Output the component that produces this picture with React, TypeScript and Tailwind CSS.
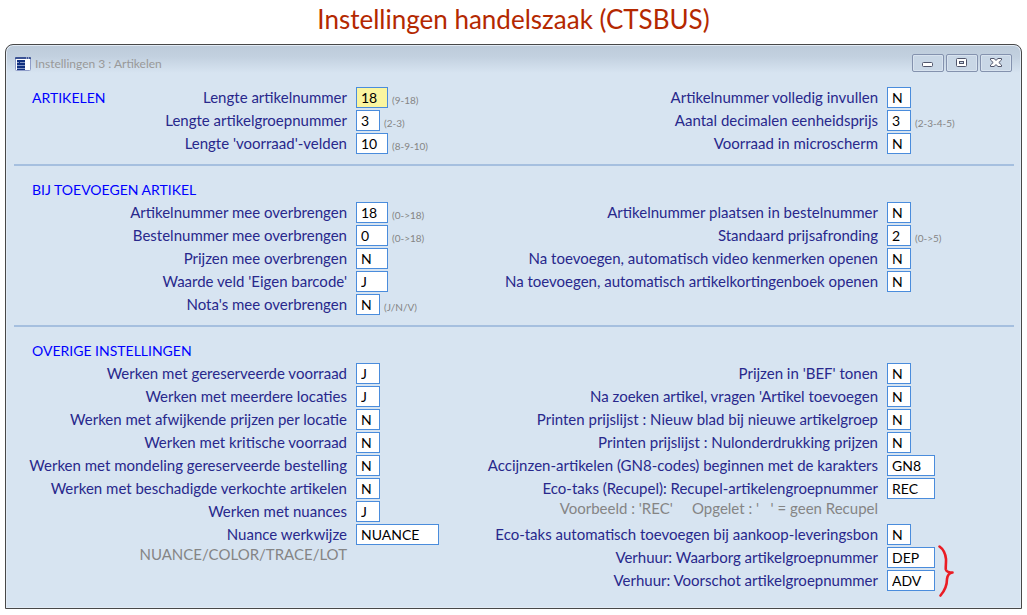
import { useId } from "react";

type FieldSize = "one" | "two" | "three" | "text";

const fieldWidths: Record<FieldSize, string> = {
  one: "w-6",
  two: "w-8",
  three: "w-12",
  text: "w-[83px]",
};

interface FieldProps {
  label: string;
  value: string;
  size?: FieldSize;
  hint?: string;
  active?: boolean;
}

function Field({ label, value, size = "one", hint, active = false }: FieldProps) {
  const id = useId();
  return (
    <div className="grid h-[23px] grid-cols-[minmax(0,1fr)_128px] items-start gap-[9px]">
      <label htmlFor={id} className="text-right leading-[21px] whitespace-nowrap text-[#28288c]">
        {label}
      </label>
      <div className="flex items-start gap-1">
        <input
          id={id}
          type="text"
          defaultValue={value}
          className={`h-[21px] border border-[#4a8cdc] px-1 text-[14px] leading-[19px] text-black outline-none ${
            fieldWidths[size]
          } ${active ? "bg-[#faf5a0]" : "bg-white"}`}
        />
        {hint && (
          <span className="pt-1 text-[10px] leading-[18px] whitespace-nowrap text-[#858585]">{hint}</span>
        )}
      </div>
    </div>
  );
}

function Note({ children }: { children: string }) {
  return (
    <p className="h-[23px] pr-[137px] text-right leading-[15px] whitespace-pre text-[#858585]">{children}</p>
  );
}

function Heading({ children }: { children: string }) {
  return <h2 className="h-[23px] pl-1 text-[14px] leading-[22px] text-[#0000ff]">{children}</h2>;
}

function Rule() {
  return <hr className="mr-[7px] ml-2 h-0.5 border-0 bg-[#a5bfdf]" />;
}

const columns = "grid grid-cols-[456fr_531fr] pl-[22px] pr-1.5";

function WindowButton({ label, children }: { label: string; children: React.ReactNode }) {
  return (
    <button
      type="button"
      aria-label={label}
      className="flex h-[18px] w-8 items-center justify-center rounded-xs border border-[#8492ae] bg-[#c9d7e6] inset-ring inset-ring-[#d8e3ef]"
    >
      {children}
    </button>
  );
}

export default function App() {
  return (
    <main className="bg-white px-[5px] pb-[6px] font-['Lato','Noto_Sans',sans-serif] text-[15px] text-black">
      <h1 className="h-11 text-center text-[26px] leading-[38px] text-[#b42800]">
        Instellingen handelszaak (CTSBUS)
      </h1>

      <div className="rounded-t-lg border border-[#484848] bg-[#d7e4f1] bg-[linear-gradient(#bdcbda_0px,#c3d1e0_12px,#d7e4f1_28px)] pb-[15px] inset-ring inset-ring-[#e2ebf5]">
        <header className="flex h-[42px] items-start justify-between pt-[9px] pr-[9px] pl-[9px]">
          <div className="flex items-center gap-1">
            <svg width="16" height="14" viewBox="0 0 16 14" aria-hidden="true">
              <rect x="0.5" y="0.5" width="15" height="13" rx="1" fill="#fff" stroke="#8e9cc8" />
              <path d="M0 2V1Q0 0 1 0H15Q16 0 16 1V2Z" fill="#3c5394" />
              <path d="M11 1h1M13 1h1" stroke="#dfe6f5" />
              <rect x="2" y="3" width="8" height="10" fill="#12307f" />
              <path d="M2 5.5h2M5 5.5h5M2 8.5h8M2 11.5h8" stroke="#b9c5e4" strokeWidth="0.7" />
            </svg>
            <span className="text-[12px] leading-[20px] text-[#999]">Instellingen 3 : Artikelen</span>
          </div>
          <div className="flex gap-0.5">
            <WindowButton label="Minimaliseren">
              <svg width="12" height="12" viewBox="0 0 12 12">
                <rect x="0.5" y="5.5" width="10" height="4" rx="1" fill="#fff" stroke="#50556b" />
              </svg>
            </WindowButton>
            <WindowButton label="Maximaliseren">
              <svg width="12" height="12" viewBox="0 0 12 12">
                <rect x="0.5" y="1.5" width="10" height="8" rx="1" fill="#fff" stroke="#50556b" />
                <rect x="3.5" y="4.5" width="4" height="2" fill="#c9d7e6" stroke="#50556b" />
              </svg>
            </WindowButton>
            <WindowButton label="Sluiten">
              <svg width="12" height="12" viewBox="0 0 12 12">
                <path
                  d="M0.5 1.5H4L6 3.4L8 1.5H11.5V3L8.8 5.5L11.5 8V9.5H8L6 7.6L4 9.5H0.5V8L3.2 5.5L0.5 3Z"
                  fill="#fff"
                  stroke="#50556b"
                />
              </svg>
            </WindowButton>
          </div>
        </header>

        <section className={`${columns} pb-2`}>
          <div className="grid grid-cols-[auto_minmax(0,1fr)]">
            <Heading>ARTIKELEN</Heading>
            <div>
              <Field label="Lengte artikelnummer" value="18" size="two" hint="(9-18)" active />
              <Field label="Lengte artikelgroepnummer" value="3" hint="(2-3)" />
              <Field label="Lengte 'voorraad'-velden" value="10" size="two" hint="(8-9-10)" />
            </div>
          </div>
          <div>
            <Field label="Artikelnummer volledig invullen" value="N" />
            <Field label="Aantal decimalen eenheidsprijs" value="3" hint="(2-3-4-5)" />
            <Field label="Voorraad in microscherm" value="N" />
          </div>
        </section>

        <Rule />

        <section className={`${columns} pt-[13px] pb-2`}>
          <div>
            <Heading>BIJ TOEVOEGEN ARTIKEL</Heading>
            <Field label="Artikelnummer mee overbrengen" value="18" size="two" hint="(0->18)" />
            <Field label="Bestelnummer mee overbrengen" value="0" size="two" hint="(0->18)" />
            <Field label="Prijzen mee overbrengen" value="N" size="two" />
            <Field label="Waarde veld 'Eigen barcode'" value="J" size="two" />
            <Field label="Nota's mee overbrengen" value="N" hint="(J/N/V)" />
          </div>
          <div className="pt-[23px]">
            <Field label="Artikelnummer plaatsen in bestelnummer" value="N" />
            <Field label="Standaard prijsafronding" value="2" hint="(0->5)" />
            <Field label="Na toevoegen, automatisch video kenmerken openen" value="N" />
            <Field label="Na toevoegen, automatisch artikelkortingenboek openen" value="N" />
          </div>
        </section>

        <Rule />

        <section className={`${columns} pt-[13px]`}>
          <div>
            <Heading>OVERIGE INSTELLINGEN</Heading>
            <Field label="Werken met gereserveerde voorraad" value="J" />
            <Field label="Werken met meerdere locaties" value="J" />
            <Field label="Werken met afwijkende prijzen per locatie" value="N" />
            <Field label="Werken met kritische voorraad" value="N" />
            <Field label="Werken met mondeling gereserveerde bestelling" value="N" />
            <Field label="Werken met beschadigde verkochte artikelen" value="N" />
            <Field label="Werken met nuances" value="J" />
            <Field label="Nuance werkwijze" value="NUANCE" size="text" />
            <Note>NUANCE/COLOR/TRACE/LOT</Note>
          </div>
          <div className="pt-[23px]">
            <Field label="Prijzen in 'BEF' tonen" value="N" />
            <Field label="Na zoeken artikel, vragen 'Artikel toevoegen" value="N" />
            <Field label="Printen prijslijst : Nieuw blad bij nieuwe artikelgroep" value="N" />
            <Field label="Printen prijslijst : Nulonderdrukking prijzen" value="N" />
            <Field label="Accijnzen-artikelen (GN8-codes) beginnen met de karakters" value="GN8" size="three" />
            <Field label="Eco-taks (Recupel): Recupel-artikelengroepnummer" value="REC" size="three" />
            <Note>{"Voorbeeld : 'REC'     Opgelet : '   ' = geen Recupel"}</Note>
            <Field label="Eco-taks automatisch toevoegen bij aankoop-leveringsbon" value="N" />
            <div className="relative">
              <Field label="Verhuur: Waarborg artikelgroepnummer" value="DEP" size="three" />
              <Field label="Verhuur: Voorschot artikelgroepnummer" value="ADV" size="three" />
              <svg
                width="16"
                height="52"
                viewBox="0 0 16 52"
                className="absolute -top-0.5 right-[61px]"
                aria-hidden="true"
              >
                <path
                  d="M1.5 1.5C5 4 7.5 9 8 14C8.2 18 7.5 22 7.8 24.5C8.5 27 11 27.5 14.5 27.5C11 28 9.5 30 9 34C9 40 6.5 46 2.5 50.5"
                  fill="none"
                  stroke="#ea1c24"
                  strokeWidth="2.6"
                  strokeLinecap="round"
                  strokeLinejoin="round"
                />
              </svg>
            </div>
          </div>
        </section>
      </div>
    </main>
  );
}
